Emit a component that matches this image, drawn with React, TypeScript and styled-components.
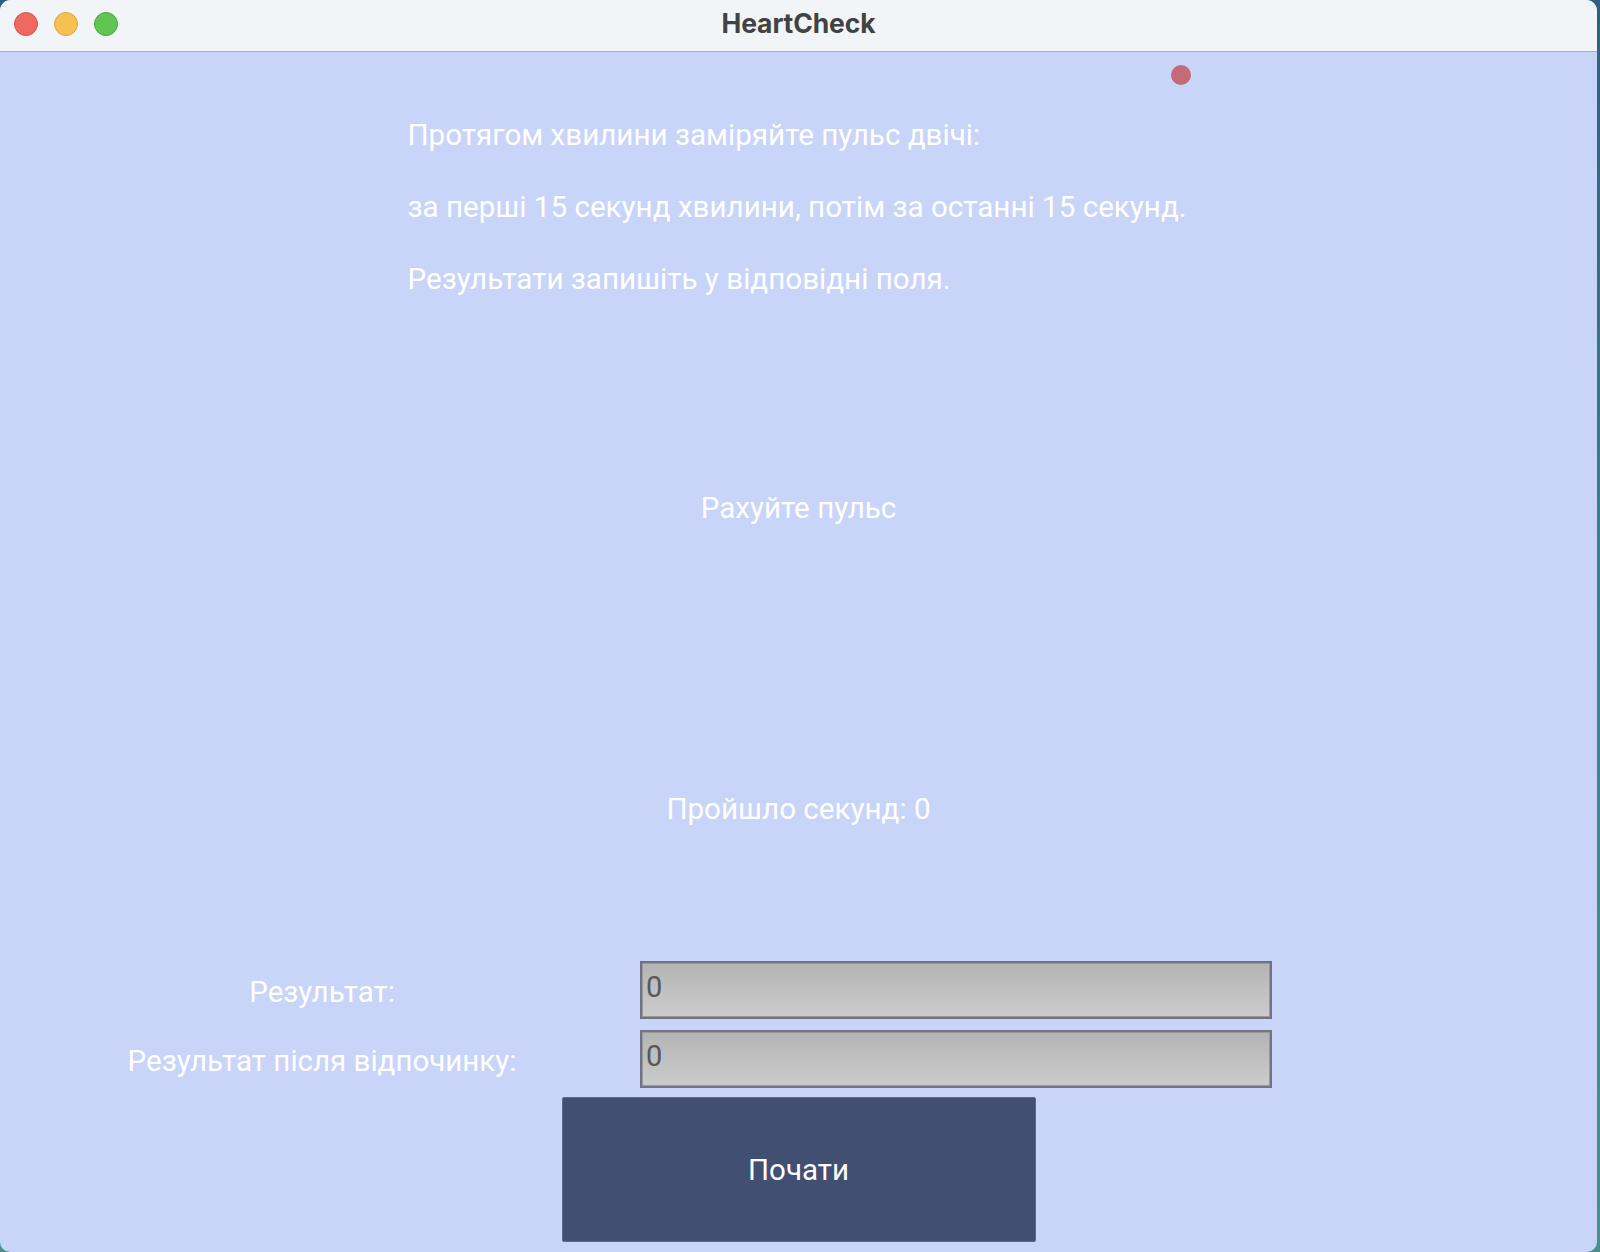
import React from "react";
import styled, { createGlobalStyle } from "styled-components";

const GlobalStyle = createGlobalStyle`
  html, body {
    margin: 0;
    padding: 0;
    width: 1600px;
    height: 1252px;
    overflow: hidden;
    background: #3b6f8c;
  }
  #root {
    width: 1600px;
    height: 1252px;
  }
`;

const Desktop = styled.div`
  width: 1600px;
  height: 1252px;
  background: linear-gradient(180deg, #2f5f80 0%, #3d7f92 45%, #4a8f8a 100%);
`;

const Window = styled.div`
  width: 1597px;
  height: 1252px;
  border-radius: 11px 11px 10px 10px;
  overflow: hidden;
  display: flex;
  flex-direction: column;
  background: #c8d4f8;
`;

const TitleBar = styled.div`
  position: relative;
  height: 51px;
  flex: 0 0 51px;
  background: #f2f5f8;
  border-bottom: 1px solid #a3abcd;
  display: flex;
  align-items: center;
  justify-content: center;
`;

const Lights = styled.div`
  position: absolute;
  left: 14px;
  top: 12px;
  display: flex;
  gap: 16px;
`;

const Light = styled.span<{ $fill: string; $edge: string }>`
  width: 22px;
  height: 22px;
  border-radius: 50%;
  background: ${(p) => p.$fill};
  border: 1px solid ${(p) => p.$edge};
`;

const Title = styled.div`
  font-family: Inter, "Liberation Sans", sans-serif;
  font-weight: 700;
  font-size: 26.5px;
  color: #424242;
  letter-spacing: -0.1px;
  margin-top: -5px;
`;

const Content = styled.div`
  position: relative;
  flex: 1;
  display: flex;
  flex-direction: column;
  align-items: center;
  font-family: Roboto, "Liberation Sans", sans-serif;
  color: #ffffff;
`;

const Indicator = styled.span`
  position: absolute;
  left: 1171px;
  top: 13px;
  width: 20px;
  height: 20px;
  border-radius: 50%;
  background: #c46b78;
`;

const Instructions = styled.div`
  margin-top: 65px;
  align-self: center;
  display: flex;
  flex-direction: column;
  gap: 36px;
  font-size: 29.6px;
  line-height: 36px;
  text-align: left;
  width: 780px;
  transform: translateX(-1px);
`;

const Line = styled.div`
  white-space: nowrap;
`;

const CenterText = styled.div<{ $top: number }>`
  margin-top: ${(p) => p.$top}px;
  font-size: 29.6px;
  line-height: 36px;
  text-align: center;
`;

const Form = styled.div`
  margin-top: 134px;
  align-self: stretch;
  display: grid;
  grid-template-columns: 640px 632px;
  row-gap: 11px;
  align-items: center;
`;

const Label = styled.div`
  font-size: 29.5px;
  line-height: 36px;
  text-align: center;
  transform: translate(2px, 2px);
`;

const Field = styled.div`
  height: 58px;
  box-sizing: border-box;
  border: 2px solid #6f7384;
  background: linear-gradient(180deg, #b4b4b4 0%, #c0c0c0 50%, #cbcbcb 100%);
  box-shadow: inset 0 0 0 1px #9a9a9a;
  color: #595959;
  font-size: 29px;
  line-height: 34px;
  padding: 7px 0 0 4px;
`;

const StartButton = styled.button`
  margin-top: 9px;
  width: 474px;
  height: 145px;
  background: #414f72;
  border: 1px solid #5b6a92;
  border-radius: 2px;
  color: #ffffff;
  font-family: Roboto, "Liberation Sans", sans-serif;
  font-size: 29.5px;
  padding: 0;
  cursor: pointer;
`;

export default function App() {
  return (
    <>
      <GlobalStyle />
      <Desktop>
        <Window>
          <TitleBar>
            <Lights>
              <Light $fill="#ee6a5f" $edge="#d8544a" />
              <Light $fill="#f6c150" $edge="#dea53a" />
              <Light $fill="#61c554" $edge="#4aa93e" />
            </Lights>
            <Title>HeartCheck</Title>
          </TitleBar>
          <Content>
            <Indicator />
            <Instructions>
              <Line>Протягом хвилини заміряйте пульс двічі:</Line>
              <Line>за перші 15 секунд хвилини, потім за останні 15 секунд.</Line>
              <Line>Результати запишіть у відповідні поля.</Line>
            </Instructions>
            <CenterText $top={193}>Рахуйте пульс</CenterText>
            <CenterText $top={265}>Пройшло секунд: 0</CenterText>
            <Form>
              <Label>Результат:</Label>
              <Field>0</Field>
              <Label>Результат після відпочинку:</Label>
              <Field>0</Field>
            </Form>
            <StartButton>Почати</StartButton>
          </Content>
        </Window>
      </Desktop>
    </>
  );
}
